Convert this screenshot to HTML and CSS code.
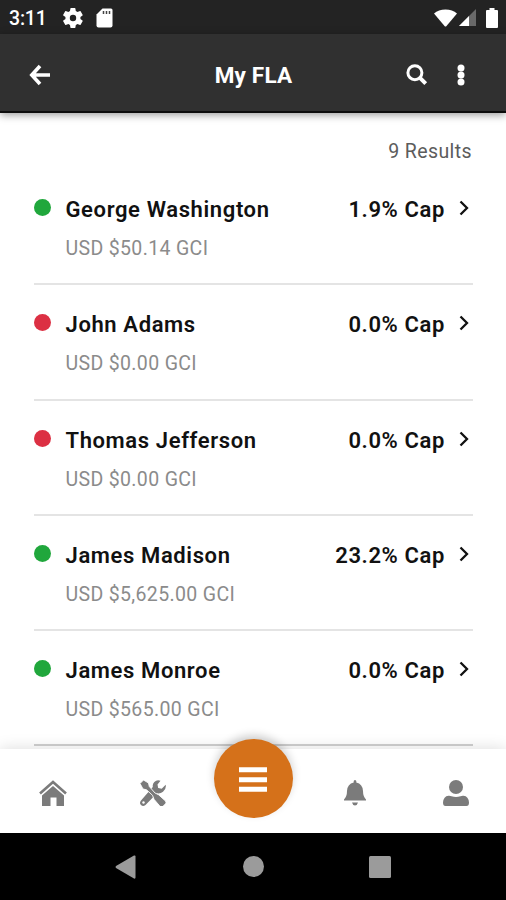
FILE: index.html
```html
<!DOCTYPE html>
<html lang="en">
<head>
    <meta charset="UTF-8">
    <title>My FLA</title>
    <link rel="stylesheet" href="styles.css">
</head>
<body>
    <div class="status-bar">
        <span class="time">3:11</span>
        <svg class="gear" width="20" height="20" viewBox="2 2 20 20" fill="#fff"><path d="M19.4 13a7.500 7.500 0 0 0 0-2l2.100-1.600a.5.5 0 0 0 .1-.7l-2-3.400a.5.5 0 0 0-.6-.2l-2.500 1a7.300 7.300 0 0 0-1.700-1l-.4-2.700a.5.5 0 0 0-.5-.4h-4a.5.5 0 0 0-.5.4L9 5.100a7.700 7.700 0 0 0-1.700 1l-2.500-1a.5.5 0 0 0-.6.200l-2 3.400a.5.5 0 0 0 .1.700L4.500 11a8 8 0 0 0 0 2l-2.200 1.600a.5.5 0 0 0-.1.700l2 3.400c.1.200.4.300.6.200l2.500-1a7.300 7.300 0 0 0 1.700 1l.4 2.700c0 .2.200.4.500.4h4c.3 0 .5-.2.500-.4l.4-2.700a7.700 7.700 0 0 0 1.700-1l2.500 1c.2.100.5 0 .6-.2l2-3.400a.5.5 0 0 0-.1-.7zM12 15.200a3.200 3.200 0 1 1 0-6.400 3.200 3.200 0 0 1 0 6.400z"/></svg>
        <svg class="sd" width="17" height="20" viewBox="0 0 17 20"><path fill="#fff" d="M6.500.5H15a1.500 1.500 0 0 1 1.500 1.500v15.500a2 2 0 0 1-2 2h-12a2 2 0 0 1-2-2v-11z"/><path stroke="#444" stroke-width="1.500" d="M7.500 3v3M10.500 3v3M13.500 3v3"/></svg>
        <div class="signals">
            <svg width="23" height="18" viewBox="0 0 23 18"><path fill="#fff" d="M0 4.500Q4.500.5 11.500.5T23 4.500L12.500 17q-1 1-2 0z"/></svg>
            <svg width="17" height="17" viewBox="0 0 17 17"><path fill="#696969" d="M17 0v17H0z"/><path fill="#fff" d="M10 7v10H0z"/></svg>
            <svg class="battery" width="12" height="20" viewBox="0 0 12 20"><path fill="#fff" d="M3.500 0h5v2H11a1 1 0 0 1 1 1v16a1 1 0 0 1-1 1H1a1 1 0 0 1-1-1V3a1 1 0 0 1 1-1h2.500z"/></svg>
        </div>
    </div>

    <div class="app-bar">
        <svg width="22" height="22" viewBox="0 0 22 22" fill="none" stroke="#fff" stroke-width="3.600"><path d="M11 2L2.800 11l8.200 9M3 11h18"/></svg>
        <h1>My FLA</h1>
        <div class="actions">
            <svg width="22" height="22" viewBox="0 0 22 22" fill="none" stroke="#fff"><circle cx="8.900" cy="8.700" r="7" stroke-width="3"/><path stroke-width="4" d="M13.700 13.700l6 6"/></svg>
            <svg class="dots" width="8" height="22" viewBox="0 0 8 22" fill="#fff"><circle cx="4" cy="4" r="3.500"/><circle cx="4" cy="11" r="3.500"/><circle cx="4" cy="18" r="3.500"/></svg>
        </div>
    </div>

    <div class="content">
        <div class="results">9 Results</div>
        <div class="row">
            <span class="dot green"></span>
            <div class="person"><div class="name">George Washington</div><div class="gci">USD $50.14 GCI</div></div>
            <div class="cap">1.9% Cap</div>
            <svg class="chevron" width="10" height="16" viewBox="0 0 10 16"><path d="M1.500 1.500L8 8l-6.500 6.500"/></svg>
        </div>
        <div class="row">
            <span class="dot red"></span>
            <div class="person"><div class="name">John Adams</div><div class="gci">USD $0.00 GCI</div></div>
            <div class="cap">0.0% Cap</div>
            <svg class="chevron" width="10" height="16" viewBox="0 0 10 16"><path d="M1.500 1.500L8 8l-6.500 6.500"/></svg>
        </div>
        <div class="row">
            <span class="dot red"></span>
            <div class="person"><div class="name">Thomas Jefferson</div><div class="gci">USD $0.00 GCI</div></div>
            <div class="cap">0.0% Cap</div>
            <svg class="chevron" width="10" height="16" viewBox="0 0 10 16"><path d="M1.500 1.500L8 8l-6.500 6.500"/></svg>
        </div>
        <div class="row">
            <span class="dot green"></span>
            <div class="person"><div class="name">James Madison</div><div class="gci">USD $5,625.00 GCI</div></div>
            <div class="cap">23.2% Cap</div>
            <svg class="chevron" width="10" height="16" viewBox="0 0 10 16"><path d="M1.500 1.500L8 8l-6.500 6.500"/></svg>
        </div>
        <div class="row">
            <span class="dot green"></span>
            <div class="person"><div class="name">James Monroe</div><div class="gci">USD $565.00 GCI</div></div>
            <div class="cap">0.0% Cap</div>
            <svg class="chevron" width="10" height="16" viewBox="0 0 10 16"><path d="M1.500 1.500L8 8l-6.500 6.500"/></svg>
        </div>
    </div>

    <div class="tabs">
        <svg class="home" width="28" height="26" viewBox="0 0 28 26"><path fill="none" stroke="#7b7b7b" stroke-width="2.600" d="M1 13.500L14 2l13 11.500"/><path fill="#7b7b7b" d="M3 15.500L14 6l11 9.500V26h-7.500v-8.500h-6V26H3z"/></svg>
        <svg width="26" height="26" viewBox="0 0 26 26"><path fill="#7b7b7b" d="M20.500.8q-3.500-1.500-6.200 1.200-2 2-1.500 5L1 20.500q-2 2.500 0 4.500t4.500 0L17 13.300q3.500.5 6-1.500 3.500-2.800 2.700-7l-4 4-3.500-.7-.7-3.500z"/><path fill="#7b7b7b" stroke="#fff" stroke-width=".9" d="M0 3.500L3.500 0l5 3 .8 3.500 5.700 6.500 3.500 1.700 7 6.300q1 1.500 0 2.800l-2.500 2.500q-1.500 1-3 0l-6-7-1.500-4-6-5.500-3.500-.8z"/><circle cx="3.500" cy="22.500" r="1.200" fill="#fff"/></svg>
        <button class="fab"><svg width="28" height="26" viewBox="0 0 28 26" stroke="#fff" stroke-width="5"><path d="M0 2.800h28M0 12.800h28M0 22.300h28"/></svg></button>
        <svg width="22" height="26" viewBox="0 0 22 26" fill="#7b7b7b"><path d="M9.700 2.500V1q1.300-1.800 2.600 0v1.500Q18.700 4 19 11q0 5.500 3 8.500v1H0v-1q3-3 3-8.500.3-7 6.700-8.500zM8 22.500h6q-.8 3-3 3t-3-3z"/></svg>
        <svg width="26" height="26" viewBox="0 0 26 26" fill="#7b7b7b"><circle cx="13" cy="7" r="7"/><path d="M5.500 15.700q1.500-.2 3 .5 4.500 1.500 9 0 1.500-.7 3-.5 5 .5 5.500 6.800 0 3.500-2.500 3.500h-21Q0 26 0 22.500q.5-6.300 5.500-6.800z"/></svg>
    </div>

    <div class="system-nav">
        <svg width="21" height="24" viewBox="0 0 21 24"><path d="M1 11L19 .5q1.500-.5 1.500 1v21q0 1.500-1.500 1L1 13q-1-1 0-2z"/></svg>
        <svg width="22" height="21" viewBox="0 0 22 21"><circle cx="11.500" cy="10.500" r="10.500"/></svg>
        <svg width="22" height="22" viewBox="0 0 22 22"><rect width="22" height="22" rx="1.500"/></svg>
    </div>
</body>
</html>
```
FILE: styles.css
```css
* { box-sizing: border-box; }
body {
    margin: 0;
    height: 900px;
    display: flex;
    flex-direction: column;
    overflow: hidden;
    font-family: Roboto, sans-serif;
    background: #fff;
    color: #111;
}
svg { display: block; flex: none; }

.status-bar {
    height: 34px;
    flex: none;
    display: flex;
    align-items: center;
    padding: 1px 8px 0 9px;
    background: #232323;
    color: #fff;
}
.time {
    width: 54px;
    padding-top: 2px;
    font-size: 19.5px;
    font-weight: 500;
    line-height: 34px;
    letter-spacing: -0.2px;
}
.sd { margin-left: 13px; }
.signals {
    display: flex;
    align-items: center;
    margin-left: auto;
}
.signals svg { margin-right: 2px; }
.signals .battery { margin: 0 0 0 8px; }

.app-bar {
    height: 79px;
    flex: none;
    display: grid;
    grid-template-columns: 1fr auto 1fr;
    align-items: center;
    padding: 5px 28px 0 29px;
    background: #303030;
    border-bottom: 2px solid #0c0c0c;
    box-shadow: 0 2px 8px rgba(0,0,0,0.4);
    z-index: 1;
}
h1 {
    margin: 0;
    color: #fff;
    font-size: 22.5px;
    font-weight: 700;
    letter-spacing: 0.2px;
}
.actions {
    display: flex;
    justify-content: flex-end;
    gap: 29px;
    padding-right: 13px;
}

.content {
    flex: 1;
    min-height: 0;
    padding: 0 33px 0 34px;
}
.results {
    height: 57px;
    padding: 24px 1px 0 0;
    text-align: right;
    font-size: 19.5px;
    line-height: 30px;
    letter-spacing: 0.4px;
    color: #5c5c5c;
}
.row {
    height: 115.3px;
    display: flex;
    align-items: flex-start;
    padding-top: 24px;
    border-bottom: 2px solid #e4e4e4;
}
.row:last-child { border-color: #d0d0d0; }
.dot {
    width: 17px;
    height: 17px;
    flex: none;
    margin: 5px 14.5px 0 0;
    border-radius: 50%;
}
.green { background: #20a73c; }
.red { background: #dc3043; }
.person { flex: 1; }
.name, .cap {
    padding-top: 1px;
    font-size: 22px;
    font-weight: 600;
    line-height: 30px;
    letter-spacing: 0.62px;
}
.gci {
    margin-top: 9px;
    font-size: 19.5px;
    line-height: 30px;
    letter-spacing: 0.35px;
    color: #8b8b8b;
}
.chevron {
    margin: 6px 4px 0 14px;
    fill: none;
    stroke: #111;
    stroke-width: 2.3;
}

.tabs {
    height: 84px;
    flex: none;
    display: grid;
    grid-template-columns: repeat(5, 1fr);
    align-items: center;
    justify-items: center;
    padding: 4px 0 0 1.5px;
    background: #fff;
    box-shadow: 0 -1px 14px rgba(0,0,0,0.13);
    z-index: 1;
}
.home { margin-left: 2px; }
.fab {
    width: 79px;
    height: 79px;
    display: flex;
    align-items: center;
    justify-content: center;
    margin-top: -30px;
    padding: 3px 2px 0 0;
    border: none;
    border-radius: 50%;
    background: #d5711a;
    box-shadow: 0 -4px 9px rgba(0,0,0,0.18);
}

.system-nav {
    height: 67px;
    flex: none;
    display: flex;
    align-items: center;
    justify-content: space-between;
    padding: 0 115px;
    background: #000;
    fill: #9b9b9b;
    z-index: 1;
}
```
